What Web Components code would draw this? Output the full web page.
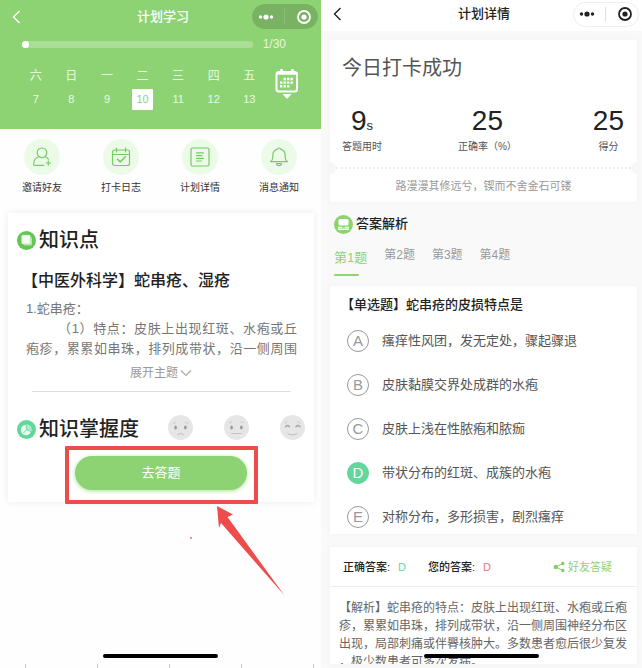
<!DOCTYPE html>
<html lang="zh-CN">
<head>
<meta charset="utf-8">
<meta name="viewport" content="width=device-width, initial-scale=1">
<title>计划学习</title>
<style>
  body {
    margin: 0;
    display: grid;
    grid-template-columns: 1fr 1fr;
    height: 100vh;
    overflow: hidden;
    background: #fefefe;
    color: #333;
    font: 12px/18px "Liberation Sans", "Noto Sans CJK SC", sans-serif;
    --green: #8ed373;
    --mint: #62d69b;
  }
</style>
</head>
<body>
<study-screen></study-screen>
<detail-screen></detail-screen>

<script>
class NavBar extends HTMLElement {
  constructor() {
    super();
    this.attachShadow({mode: 'open'}).innerHTML = `
      <style>
        :host { display: grid; grid-template-columns: 1fr auto 1fr; align-items: center; height: 33px; padding: 0 3px 0 8px; color: #222; --pill: #fff; --edge: #eee; }
        :host([green]) { color: #fff; --pill: #78b262; --edge: #78b262; }
        h1 { margin: 0; font-size: 13px; line-height: 18px; font-weight: 500; }
        button { padding: 0; border: 0; background: none; color: inherit; display: flex; }
        .pill { justify-self: end; display: flex; align-items: center; justify-content: space-around; width: 66px; height: 25px; box-sizing: border-box; border: 1px solid var(--edge); border-radius: 13px; background: var(--pill); }
        i { width: 1px; height: 15px; background: currentColor; opacity: .15; }
      </style>
      <button aria-label="返回"><svg width="16" height="16" viewBox="0 0 16 16" fill="none" stroke="currentColor" stroke-width="1.4"><path d="M11.500 2L5.500 8l6 6"/></svg></button>
      <h1><slot></slot></h1>
      <div class="pill">
        <button aria-label="更多"><svg width="16" height="16" viewBox="0 0 16 16" fill="currentColor"><circle cx="2.500" cy="8" r="1.700"/><circle cx="8" cy="8" r="2.600"/><circle cx="13.500" cy="8" r="1.700"/></svg></button>
        <i></i>
        <button aria-label="关闭"><svg width="16" height="16" viewBox="0 0 16 16" fill="currentColor"><circle cx="8" cy="8" r="6" fill="none" stroke="currentColor" stroke-width="1.800"/><circle cx="8" cy="8" r="2.600"/></svg></button>
      </div>
    `;
  }
}
customElements.define('nav-bar', NavBar);

class HomeIndicator extends HTMLElement {
  constructor() {
    super();
    this.attachShadow({mode: 'open'}).innerHTML = `
      <style>
        :host { display: block; position: absolute; bottom: 10px; left: 0; right: 0; margin: 0 auto; width: 36%; height: 4px; border-radius: 2px; background: #000; }
      </style>
    `;
  }
}
customElements.define('home-indicator', HomeIndicator);

class PlanProgress extends HTMLElement {
  constructor() {
    super();
    this.attachShadow({mode: 'open'}).innerHTML = `
      <style>
        :host { display: flex; align-items: center; gap: 10px; padding: 0 35px 0 22px; height: 22px; font-size: 12px; color: #e6f7df; }
        .track { flex: 1; height: 7px; border-radius: 4px; background: #aade95; }
        .track div { width: 7px; height: 7px; border-radius: 4px; background: #fff; }
      </style>
      <div class="track"><div></div></div>
      <slot></slot>
    `;
  }
}
customElements.define('plan-progress', PlanProgress);

class WeekDay extends HTMLElement {
  constructor() {
    super();
    this.attachShadow({mode: 'open'}).innerHTML = `
      <style>
        :host { display: flex; flex-direction: column; align-items: center; gap: 2px; flex: 1; color: #eaf9e4; font-size: 12px; line-height: 21px; }
        button { width: 21px; height: 21px; padding: 0; border: 0; border-radius: 1px; background: none; color: inherit; font: 11px/21px "Liberation Sans", sans-serif; }
        :host([selected]) button { background: #fff; color: var(--green); }
      </style>
      <slot></slot>
      <button>${this.getAttribute('date')}</button>
    `;
  }
}
customElements.define('week-day', WeekDay);

class ShortcutItem extends HTMLElement {
  constructor() {
    super();
    this.attachShadow({mode: 'open'}).innerHTML = `
      <style>
        :host { display: block; }
        a { display: flex; flex-direction: column; align-items: center; gap: 5px; color: #333; font-size: 10px; line-height: 16px; text-decoration: none; }
        span { display: grid; place-items: center; width: 36px; height: 36px; border-radius: 50%; background: #ecfae8; }
        svg { width: 22px; height: 22px; fill: none; stroke: #77ca69; stroke-width: 1.2; stroke-linecap: round; stroke-linejoin: round; }
      </style>
      <a href="#">
        <span><svg viewBox="0 0 22 22">${ShortcutItem.icons[this.getAttribute('icon')]}</svg></span>
        <slot></slot>
      </a>
    `;
  }
}
ShortcutItem.icons = {
  invite: '<circle cx="11" cy="6.800" r="4.800"/><path d="M7.800 10.800C4.500 12 2.600 15 2.600 18.200c0 .8.400 1.200 1.200 1.200h9M14.200 10.800c1.300.500 2.300 1.300 3.200 2.400M17.300 14.800v4.400M15.100 17h4.400"/>',
  log: '<path d="M4.500 4h13a2 2 0 0 1 2 2v11.500a2 2 0 0 1-2 2h-13a2 2 0 0 1-2-2V6a2 2 0 0 1 2-2zM2.500 8.500h17M6.500 2v4M15.500 2v4"/><path stroke-width="1.600" d="M7.500 13.200l2.700 2.700 5.200-5.200"/>',
  detail: '<rect x="2" y="2" width="18" height="18" rx="1.500"/><path d="M7.500 6.800h7M7.500 9.600h5.500M7.500 12.300h7M7.500 15h5"/>',
  notice: '<path d="M2.500 15.700h17c-1.700-1.200-2.300-2.500-2.300-4.500V9.500c0-3.300-2.400-5.700-4.700-6.400-.2-1.500-2.800-1.500-3 0-2.300.700-4.700 3.100-4.700 6.400v1.700c0 2-.6 3.300-2.300 4.500z"/><path d="M8.500 17.500c.3 2.700 4.700 2.700 5 0z"/>'
};
customElements.define('shortcut-item', ShortcutItem);

class MoodFace extends HTMLElement {
  constructor() {
    super();
    this.attachShadow({mode: 'open'}).innerHTML = `
      <style>:host { display: flex; }</style>
      <svg width="25" height="25" viewBox="0 0 25 25" fill="none" stroke="#a8a8a8" stroke-linecap="round">
        <circle cx="12.500" cy="12.500" r="12.500" fill="#e6e6e6" stroke="none"/>
        ${MoodFace.faces[this.getAttribute('mood')]}
      </svg>
    `;
  }
}
MoodFace.eyes = '<ellipse cx="7.600" cy="12.500" rx="1.300" ry="2" fill="#999" stroke="none"/><ellipse cx="17.400" cy="12.500" rx="1.300" ry="2" fill="#999" stroke="none"/>';
MoodFace.faces = {
  sad: MoodFace.eyes + '<path d="M5 8.500l2.500-1M20 8.500l-2.500-1" stroke="#ccc"/><path d="M9.500 19.700c1.500-1.600 4.500-1.600 6 0" stroke="#bbb"/>',
  flat: MoodFace.eyes + '<path d="M5.500 7.500l2.500-.5M19.500 7.500L17 7" stroke="#ccc"/><path d="M7.500 18.500h10" stroke="#c4c4c4"/>',
  happy: '<path d="M5.500 11.700q2-2.400 4 0M16 11.700q2-2.400 4 0" stroke-width="1.400"/><path d="M5 8l2-1M20 8l-2-1" stroke="#ccc"/><path d="M8 18.500c2.300 2 6.700 2 9 0" stroke="#bbb"/>'
};
customElements.define('mood-face', MoodFace);

class SectionTitle extends HTMLElement {
  constructor() {
    super();
    this.attachShadow({mode: 'open'}).innerHTML = `
      <style>
        :host { display: flex; align-items: center; gap: 3px; }
        h2 { margin: 0; font-size: 20px; line-height: 28px; font-weight: 500; color: #222; white-space: nowrap; }
        :host([small]) h2 { font-size: 13px; line-height: 20px; }
        svg { flex: none; }
      </style>
      <svg width="19" height="19" viewBox="0 0 19 19">${SectionTitle.icons[this.getAttribute('icon')]}</svg>
      <h2><slot></slot></h2>
    `;
  }
}
SectionTitle.icons = {
  book: '<circle cx="9.500" cy="9.500" r="9.500" fill="#62c554"/><rect x="6.500" y="6" width="8.500" height="8.500" rx="1.500" fill="#b8e8ae"/><rect x="4.500" y="4" width="9" height="9" rx="1.500" fill="#f4fcf2" stroke="#a5dd9a" stroke-width=".5"/>',
  pie: '<circle cx="9.500" cy="9.500" r="9.500" fill="#62d69b"/><circle cx="9" cy="10" r="5.200" fill="#e9faf2"/><path d="M9.500 9.500V4a5.500 5.500 0 0 1 5 7.500z" fill="#a9ead0"/><path d="M9.300 4.500v5.200l-3 3.500M9.300 9.700l5 1.800" fill="none" stroke="#62d69b" stroke-width=".8"/>',
  answer: '<circle cx="9.500" cy="9.500" r="9.500" fill="#8ed373"/><rect x="4.500" y="4" width="10" height="6.500" rx="1.500" fill="#fff"/><path d="M4 11.700h3.500l1 1h2l1-1H15v3.300H4z" fill="#fff"/><path d="M4 13.400h11" stroke="#8ed373" stroke-width=".6"/>'
};
customElements.define('section-title', SectionTitle);

class StudyScreen extends HTMLElement {
  constructor() {
    super();
    this.attachShadow({mode: 'open'}).innerHTML = `
      <style>
        :host { display: block; position: relative; min-width: 0; overflow: hidden; }
        header { background: var(--green); padding-bottom: 19px; }
        .week { display: flex; align-items: flex-start; padding: 11px 22px 0 18px; }
        .calendar { padding: 2px 0 0; border: 0; margin-left: 8px; background: none; display: flex; }
        nav { display: flex; justify-content: space-between; padding: 10px 22px 0; }
        .card { position: relative; margin: 17px 7px 0 8px; padding: 13px 9px 12px; background: #fff; box-shadow: 0 0 8px rgba(0,0,0,.08); }
        h3 { margin: 15px 0 6px 5px; font-size: 16px; line-height: 24px; font-weight: 500; color: #222; white-space: nowrap; }
        .text { margin: 0 8px 0 9px; font-size: 13px; line-height: 20px; color: #777; text-align: justify; }
        .text p { margin: 0; }
        .text .clip { text-align-last: justify; text-indent: 32px; }
        .more { display: flex; align-items: center; justify-content: center; gap: 2px; width: 100%; padding: 0; border: 0; margin: 5px 0 9px; background: none; color: #999; font: inherit; line-height: 18px; }
        hr { margin: 0 14px 0 15px; border: 0; border-top: 1px solid #ddd; }
        .mastery { display: flex; justify-content: space-between; align-items: center; margin-top: 23px; }
        .faces { display: flex; gap: 31px; margin-bottom: 3px; }
        .action { position: relative; width: 172px; margin: 13px auto 0; }
        .go { display: block; width: 100%; height: 34px; padding: 0; border: 0; border-radius: 17px; background: var(--green); color: #fff; font: inherit; font-size: 13px; box-shadow: 0 1px 4px #a8e294; }
        .mark { position: absolute; inset: -10px -11px -14px -10px; border: 4px solid #ee4b4b; border-radius: 1px; pointer-events: none; }
        .arrow { position: absolute; left: 115px; top: 50px; pointer-events: none; }
        .ticks { position: absolute; bottom: 0; left: 25px; right: 7px; height: 4px; display: flex; justify-content: space-between; }
        .ticks i { width: 1px; background: #c5c8d2; }
      </style>
      <header>
        <nav-bar green>计划学习</nav-bar>
        <plan-progress>1/30</plan-progress>
        <div class="week">
          <week-day date="7">六</week-day>
          <week-day date="8">日</week-day>
          <week-day date="9">一</week-day>
          <week-day date="10" selected>二</week-day>
          <week-day date="11">三</week-day>
          <week-day date="12">四</week-day>
          <week-day date="13">五</week-day>
          <button class="calendar" aria-label="日历">
            <svg width="24" height="32" viewBox="0 0 24 32" fill="none" stroke="#fff">
              <rect x="1.500" y="4" width="20.500" height="19.500" rx="2.500" stroke-width="2"/>
              <path d="M1.500 5.500h20.500M6.500 1v4M17.500 1v4" stroke-width="2.500"/>
              <path d="M8.500 11h10M5 14.600h13.500M5 18.200h10" stroke-width="2.400" stroke-dasharray="2.400 1.100"/>
              <path d="M7.500 26h9L12 31z" fill="#fff" stroke="none"/>
            </svg>
          </button>
        </div>
      </header>
      <nav>
        <shortcut-item icon="invite">邀请好友</shortcut-item>
        <shortcut-item icon="log">打卡日志</shortcut-item>
        <shortcut-item icon="detail">计划详情</shortcut-item>
        <shortcut-item icon="notice">消息通知</shortcut-item>
      </nav>
      <section class="card">
        <section-title icon="book">知识点</section-title>
        <h3>【中医外科学】蛇串疮、湿疮</h3>
        <div class="text">
          <p>1.蛇串疮：</p>
          <p class="clip">（1）特点：皮肤上出现红斑、水疱或丘疱疹，累累如串珠，排列成带状，沿一侧周围</p>
        </div>
        <button class="more">展开主题<svg width="12" height="8" viewBox="0 0 12 8" fill="none" stroke="#aaa" stroke-width="1.200"><path d="M1 1.500l5 5 5-5"/></svg></button>
        <hr>
        <div class="mastery">
          <section-title icon="pie">知识掌握度</section-title>
          <div class="faces">
            <mood-face mood="sad"></mood-face>
            <mood-face mood="flat"></mood-face>
            <mood-face mood="happy"></mood-face>
          </div>
        </div>
        <div class="action">
          <button class="go">去答题</button>
          <div class="mark"></div>
          <svg class="arrow" width="96" height="92" viewBox="0 0 96 92" fill="#ee4b4b">
            <path d="M27 0l16 8.500-5.500 2.500L94.500 89.500 31 17l-2 5z"/>
            <rect y="31" width="2" height="2" opacity=".6"/>
          </svg>
        </div>
      </section>
      <home-indicator></home-indicator>
      <div class="ticks"><i></i><i></i><i></i><i></i><i></i></div>
    `;
  }
}
customElements.define('study-screen', StudyScreen);

class StatItem extends HTMLElement {
  constructor() {
    super();
    this.attachShadow({mode: 'open'}).innerHTML = `
      <style>
        :host { display: flex; flex-direction: column; align-items: center; gap: 1px; font-size: 10px; line-height: 16px; color: #555; }
        b { font-size: 28px; line-height: 34px; font-weight: 400; color: #222; }
        small { font-size: 13px; line-height: 13px; }
      </style>
      <b>${this.getAttribute('value')}<small>${this.getAttribute('unit') || ''}</small></b>
      <slot></slot>
    `;
  }
}
customElements.define('stat-item', StatItem);

class AnswerOption extends HTMLElement {
  constructor() {
    super();
    const checked = this.hasAttribute('checked') ? 'checked' : '';
    this.attachShadow({mode: 'open'}).innerHTML = `
      <style>
        :host { display: block; }
        label { display: flex; align-items: center; gap: 13px; height: 22px; font-size: 13px; color: #555; white-space: nowrap; }
        .key { display: grid; place-items: center; width: 22px; height: 22px; font-size: 15px; line-height: 22px; color: #999; }
        .key > * { grid-area: 1 / 1; }
        input { appearance: none; margin: 0; width: 22px; height: 22px; box-sizing: border-box; border: 1px solid #999; border-radius: 50%; }
        input:checked { background: var(--mint); border-color: var(--mint); }
        input:checked + span { color: #fff; }
        .key span { z-index: 1; }
      </style>
      <label>
        <span class="key"><input type="radio" ${checked}><span>${this.getAttribute('key')}</span></span>
        <slot></slot>
      </label>
    `;
  }
}
customElements.define('answer-option', AnswerOption);

class DetailScreen extends HTMLElement {
  constructor() {
    super();
    this.attachShadow({mode: 'open'}).innerHTML = `
      <style>
        :host { display: flex; flex-direction: column; position: relative; min-width: 0; height: 100vh; overflow: hidden; background: #f9f9f9; }
        nav-bar { flex: none; height: 31px; padding-bottom: 3px; box-sizing: border-box; background: #fff; }
        main { flex: 1; min-height: 0; display: flex; flex-direction: column; padding: 9px 5px 4px 9px; }
        .card { flex: none; background: #fff; box-shadow: 0 0 6px rgba(0,0,0,.03); }
        .result h2 { margin: 0; padding: 14px 12px 0; font-size: 20px; line-height: 28px; font-weight: 400; color: #555; }
        .stats { display: flex; justify-content: space-between; padding: 22px 13px 7px 12px; }
        .tear { display: flex; align-items: center; justify-content: space-between; height: 12px; overflow: hidden; }
        .tear i { width: 6px; height: 12px; background: #f7f7f7; border-radius: 0 6px 6px 0; }
        .tear i:last-child { border-radius: 6px 0 0 6px; }
        .tear div { flex: 1; border-top: 2px dotted #eee; }
        .motto { margin: 0; padding: 3px 0 7px; font-size: 11px; line-height: 18px; text-align: center; color: #999; }
        section-title { flex: none; padding: 12px 0 0 4px; }
        .tabs { flex: none; display: flex; gap: 17px; padding: 10px 4px 0; margin-bottom: 9px; }
        .tabs button { padding: 0 0 11px; border: 0; background: none; color: #999; font: inherit; line-height: 22px; }
        .tabs .on { display: flex; flex-direction: column; gap: 5px; padding: 3px 0 0; color: var(--green); font-size: 13px; }
        .tabs .on::after { content: ""; width: 25px; height: 2px; border-radius: 1px; background: var(--green); }
        .question { padding: 9px 9px 6px; }
        .question h3 { margin: 0 0 15px 2px; font-size: 13px; line-height: 20px; font-weight: 500; color: #222; white-space: nowrap; }
        .options { display: flex; flex-direction: column; gap: 22px; padding-left: 8px; }
        .review { flex: 1; min-height: 0; overflow: hidden; margin-top: 13px; }
        .line { display: flex; align-items: center; height: 39px; padding: 0 25px 0 13px; border-bottom: 1px solid #eee; font-size: 11px; color: #222; white-space: nowrap; }
        .line b { font-weight: 500; }
        .line span { margin: 0 22px 0 8px; color: var(--mint); }
        .line .mine { color: #f07474; }
        .line a { display: flex; align-items: center; gap: 3px; margin-left: auto; color: var(--green); text-decoration: none; }
        .review p { margin: 12px 9px 0; line-height: 18px; color: #666; word-break: break-all; line-break: anywhere; }
      </style>
      <nav-bar>计划详情</nav-bar>
      <main>
        <section class="card result">
          <h2>今日打卡成功</h2>
          <div class="stats">
            <stat-item value="9" unit="s">答题用时</stat-item>
            <stat-item value="25">正确率（%）</stat-item>
            <stat-item value="25">得分</stat-item>
          </div>
          <div class="tear"><i></i><div></div><i></i></div>
          <p class="motto">路漫漫其修远兮，锲而不舍金石可镂</p>
        </section>
        <section-title icon="answer" small>答案解析</section-title>
        <div class="tabs">
          <button class="on">第1题</button>
          <button>第2题</button>
          <button>第3题</button>
          <button>第4题</button>
        </div>
        <section class="card question">
          <h3>【单选题】蛇串疮的皮损特点是</h3>
          <div class="options">
            <answer-option key="A">瘙痒性风团，发无定处，骤起骤退</answer-option>
            <answer-option key="B">皮肤黏膜交界处成群的水疱</answer-option>
            <answer-option key="C">皮肤上浅在性脓疱和脓痂</answer-option>
            <answer-option key="D" checked>带状分布的红斑、成簇的水疱</answer-option>
            <answer-option key="E">对称分布，多形损害，剧烈瘙痒</answer-option>
          </div>
        </section>
        <section class="card review">
          <div class="line">
            <b>正确答案:</b><span>D</span>
            <b>您的答案:</b><span class="mine">D</span>
            <a href="#"><svg width="12" height="12" viewBox="0 0 12 12" fill="#7fcf66" stroke="#7fcf66"><path d="M9.500 2.500L3 6l6.500 3.500" fill="none"/><circle cx="2.800" cy="6" r="2.200" stroke="none"/><circle cx="9.700" cy="2.500" r="1.700" stroke="none"/><circle cx="9.700" cy="9.500" r="1.700" stroke="none"/></svg>好友答疑</a>
          </div>
          <p>【解析】蛇串疮的特点：皮肤上出现红斑、水疱或丘疱疹，累累如串珠，排列成带状，沿一侧周围神经分布区出现，局部刺痛或伴臖核肿大。多数患者愈后很少复发，极少数患者可多次发病。</p>
        </section>
      </main>
      <home-indicator></home-indicator>
    `;
  }
}
customElements.define('detail-screen', DetailScreen);
</script>
</body>
</html>
